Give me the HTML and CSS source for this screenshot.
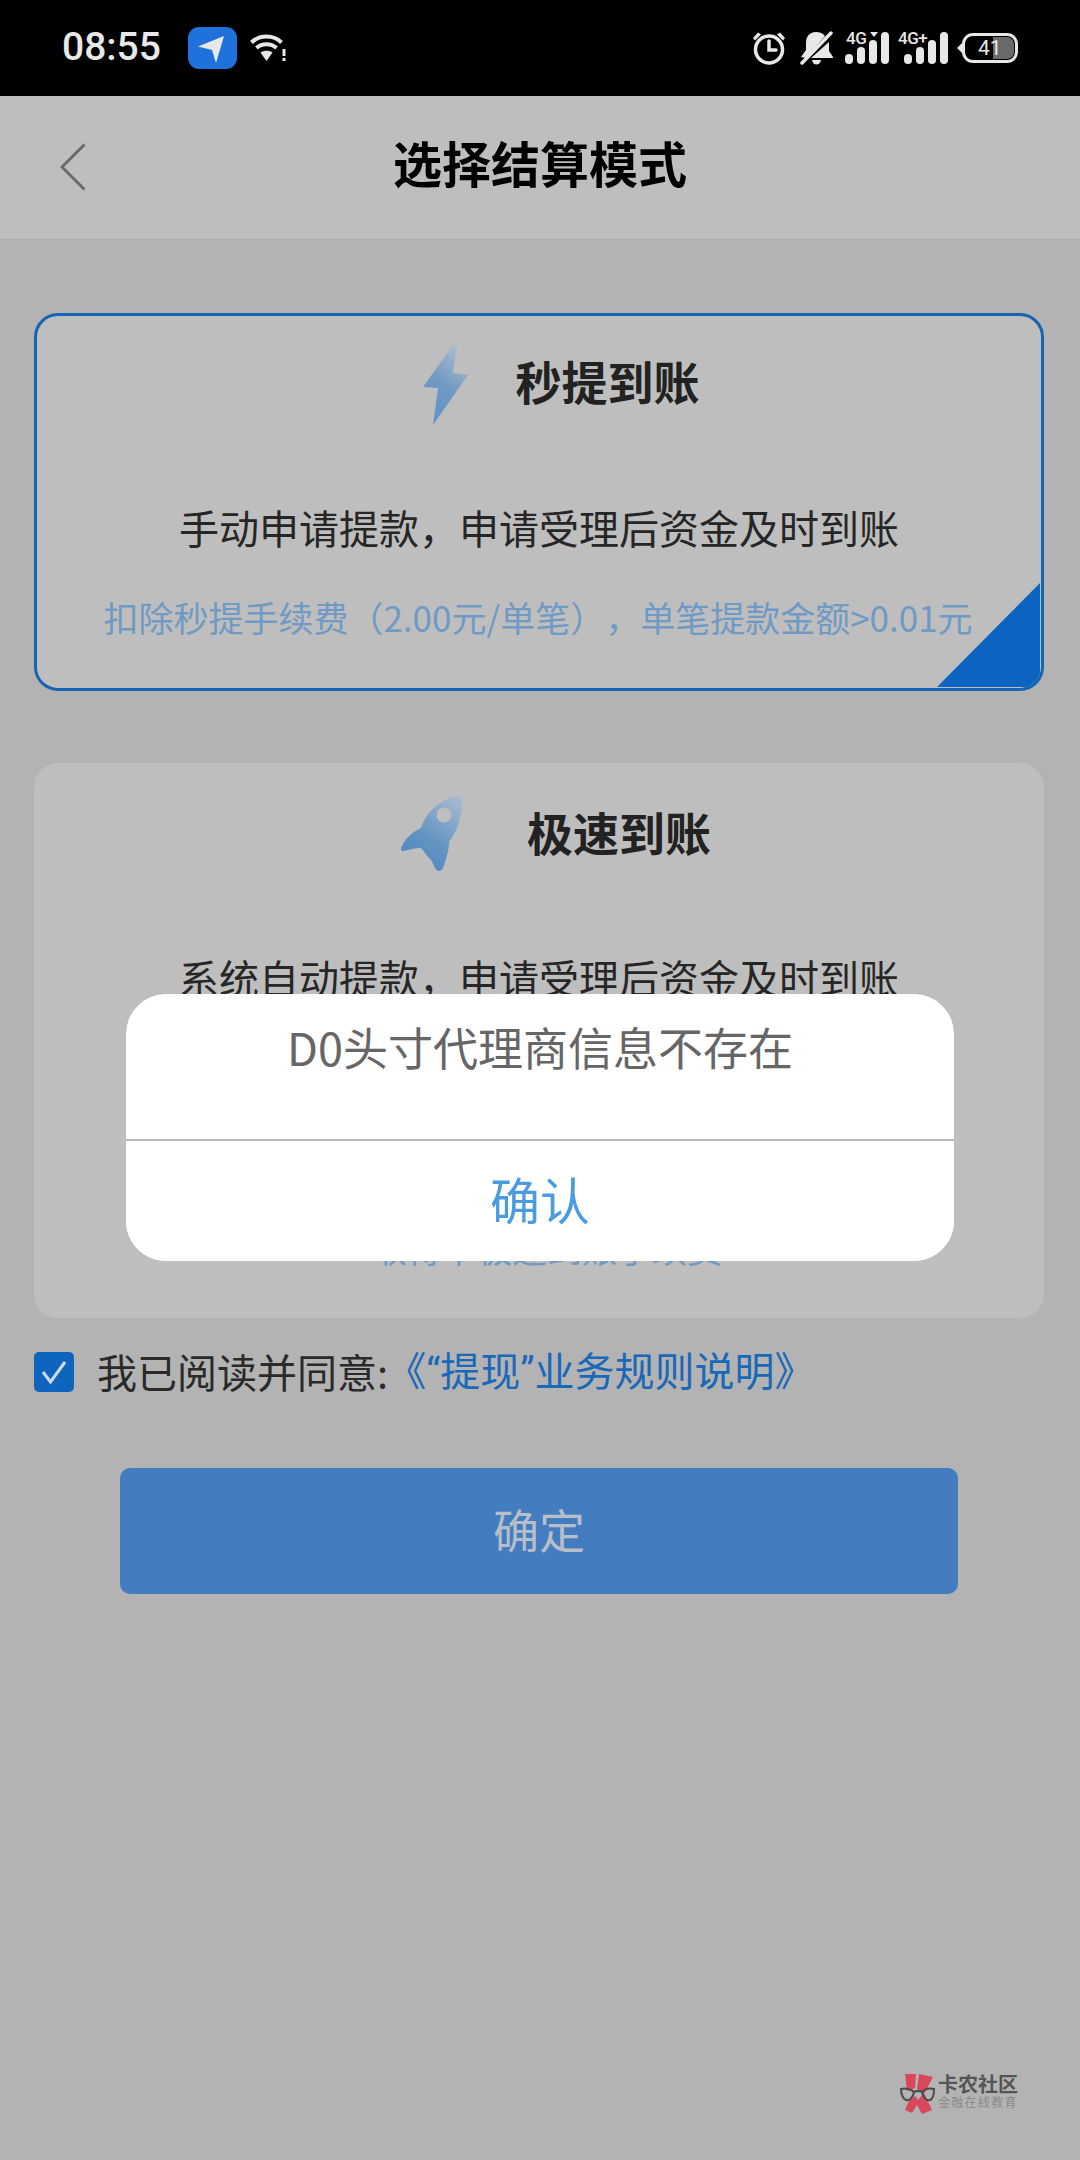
FILE: index.html
```html
<!DOCTYPE html>
<html lang="zh-CN">
<head>
<meta charset="utf-8">
<title>选择结算模式</title>
<link rel="stylesheet" href="styles.css">
</head>
<body>
<div class="page">
  <header class="status">
    <div class="status-left">
      <span class="time">08:55</span>
      <span class="loc">
        <svg width="49" height="42" viewBox="0 0 49 42"><path class="glyph" d="M10 19.500 36 9 28 36 24 23z"/></svg>
      </span>
      <svg class="wifi" width="36" height="30" viewBox="0 0 36 30"><path class="wifi-arc" d="M1.500 9.500C9.500 1.500 23.500 1.500 31.500 9.500M6.500 15C12 10 21 10 26.500 15"/><path class="glyph" d="M10.500 19.500C13.500 17 19.500 17 22.500 19.500L16.500 28zM32.500 16h3v7h-3zM32.500 25h3v3h-3z"/></svg>
    </div>
    <div class="status-right">
      <svg class="ic-alarm" width="34" height="34" viewBox="0 0 34 34"><circle class="ln" cx="17" cy="18.500" r="13.500"/><path class="ln" d="M17 10v9h7"/><path class="glyph" d="M1 7 6 1.500l3 2-6 6zM33 7l-5-5.500-3 2 6 6z"/></svg>
      <svg class="ic-bell" width="34" height="36" viewBox="0 0 34 36"><path class="glyph" d="M16 2c-7 0-10 5-10 11v7l-5 7 5 1L25 6c-2-2.500-5-4-9-4zM29 12v9l4 6v1H11zM12 30h9c-.5 3-2.500 4.500-4.500 4.500S12.500 33 12 30z"/><path class="ln" d="M2 33 31 3"/></svg>
      <span class="signal">
        <span class="net">4G</span>
        <svg class="sim-mark" width="8" height="5" viewBox="0 0 8 5"><path class="glyph" d="M0 0h8L4 5z"/></svg>
        <span class="bars">
          <i class="b1"></i><i class="b2"></i><i class="b3"></i><i class="b4"></i>
        </span>
      </span>
      <span class="signal signal-plus">
        <span class="net">4G+</span>
        <span class="bars">
          <i class="b1"></i><i class="b2"></i><i class="b3"></i><i class="b4"></i>
        </span>
      </span>
      <span class="battery"><span class="battery-fill"></span><span class="battery-num">41</span></span>
    </div>
  </header>

  <nav class="nav">
    <svg class="back" width="26" height="48" viewBox="0 0 26 48"><path d="M24.500 1.500 2 24l22.500 22.500"/></svg>
    <h1 class="nav-title">选择结算模式</h1>
  </nav>

  <main class="main">
    <section class="card card-active">
      <div class="card-head head-a">
        <svg width="46" height="88" viewBox="0 0 46 88">
          <defs><linearGradient id="gb" x1="0.7" y1="0" x2="0.3" y2="1"><stop offset="0" stop-color="#b4c0cc"/><stop offset=".55" stop-color="#7099c2"/><stop offset="1" stop-color="#6095c8"/></linearGradient></defs>
          <path fill="url(#gb)" d="M35 0 30 35 45 37 10 87 15 50 0 49z"/>
        </svg>
        <h2 class="card-title">秒提到账</h2>
      </div>
      <p class="desc desc-a">手动申请提款，申请受理后资金及时到账</p>
      <p class="hint hint-a">扣除秒提手续费（2.00元/单笔），单笔提款金额&gt;0.01元</p>
      <svg class="corner" width="103" height="104" viewBox="0 0 103 104"><path d="M103 0V104H0z"/></svg>
    </section>

    <section class="card">
      <div class="card-head head-b">
        <svg width="66" height="78" viewBox="0 0 66 78">
          <defs><linearGradient id="gr" x1="0.9" y1="0" x2="0.3" y2="1"><stop offset="0" stop-color="#a9bccf"/><stop offset=".6" stop-color="#6594c2"/><stop offset="1" stop-color="#4f88c0"/></linearGradient></defs>
          <path fill="url(#gr)" fill-rule="evenodd" d="M60 0C64 0 64 5 63 10 62 24 58 36 50 47 50 54 48 62 44 73 42 77 38 77 36 73 34 68 32 64 29 62 26 58 24 54 21 53 15 53 10 55 5 56 2 56 1 54 3 51 6 44 13 37 22 33 26 21 36 6 60 0ZM45 12.500A7.500 7.500 0 1 0 45 27.500 7.500 7.500 0 1 0 45 12.500Z"/>
        </svg>
        <h2 class="card-title">极速到账</h2>
      </div>
      <p class="desc desc-b">系统自动提款，申请受理后资金及时到账</p>
      <p class="hint hint-b">取得卡极速到账手续费</p>
    </section>

    <label class="agree">
      <span class="check">
        <svg width="40" height="40" viewBox="0 0 40 40"><path d="M9 20 16.500 30 31 10"/></svg>
      </span>
      <span class="agree-text">我已阅读并同意:</span><span class="agree-link">《<span class="quote">“</span>提现<span class="quote">”</span>业务规则说明》</span>
    </label>

    <button class="submit" type="button">确定</button>
  </main>

  <div class="watermark">
    <svg width="35" height="43" viewBox="0 0 35 43">
      <path class="wm-red" d="M5 2 16 2 15 16 7 19zM19 2 33 5 24 22 17 17zM9 29 15 24 18 28 24 21 32 38 22 42 17 33 12 41 5 38z"/>
      <path class="wm-glass" d="M1 17C5 16 11 17 14 20 13 26 9 29 6 28 3 27 1 22 1 17ZM34 17C30 16 25 17 22 20 23 26 27 29 30 28 33 27 34 22 34 17ZM14 20C16 18.500 20 18.500 22 20"/>
    </svg>
    <div class="wm-text">
      <span class="wm-name">卡农社区</span>
      <span class="wm-sub">金融在线教育</span>
    </div>
  </div>

  <div class="dialog">
    <p class="dialog-msg">D0头寸代理商信息不存在</p>
    <button class="dialog-ok" type="button">确认</button>
  </div>
</div>
</body>
</html>
```

FILE: styles.css
```css
* { box-sizing: border-box; }
html, body { margin: 0; padding: 0; }
body {
  font-family: "Noto Sans CJK SC", "Noto Sans", sans-serif;
  background: #b3b3b3;
  text-spacing-trim: space-all;
}
p, h1, h2 { margin: 0; }
.page {
  position: relative;
  width: 1080px;
  height: 2160px;
  overflow: hidden;
  background: #b3b3b3;
}

/* status bar */
.status {
  height: 96px;
  background: #000;
  display: flex;
  justify-content: space-between;
  align-items: center;
  padding: 0 62px 0 62px;
}
.status-left { display: flex; align-items: center; }
.time {
  font-family: Roboto, sans-serif;
  font-size: 39px;
  font-weight: 500;
  color: #e8e8e8;
  width: 126px;
  line-height: 46px;
  margin-top: -2px;
}
.loc {
  width: 49px;
  height: 42px;
  border-radius: 11px;
  background: #1f72dc;
  display: block;
}
.loc svg { display: block; }
.glyph { fill: #e8e8e8; }
.wifi { margin-left: 13px; margin-top: -1px; }
.wifi-arc { fill: none; stroke: #e8e8e8; stroke-width: 4; }
.status-right { display: flex; align-items: center; }
.ln { fill: none; stroke: #e8e8e8; stroke-width: 3.500; stroke-linecap: round; }
.ic-alarm { margin-right: 14px; }
.ic-bell { margin-right: 12px; }
.signal { position: relative; display: block; width: 43px; height: 32px; margin-right: 9px; }
.signal-plus { width: 50px; margin-right: 14px; }
.net {
  position: absolute;
  left: 0;
  top: -1px;
  font-family: Roboto, sans-serif;
  font-size: 17px;
  font-weight: 500;
  line-height: 14px;
  letter-spacing: -.5px;
  color: #e8e8e8;
}
.sim-mark { position: absolute; left: 24px; top: 0; display: block; }
.bars { position: absolute; right: 0; bottom: 0; display: flex; align-items: flex-end; gap: 4px; }
.bars i { display: block; width: 8px; border-radius: 4px; background: #e8e8e8; }
.b1 { height: 10px; }
.b2 { height: 17px; }
.b3 { height: 24px; }
.b4 { height: 32px; }
.battery {
  position: relative;
  display: block;
  width: 56px;
  height: 30px;
  border: 3px solid #e8e8e8;
  border-radius: 11px;
}
.battery::before {
  content: "";
  position: absolute;
  left: -8px;
  top: 7px;
  width: 0;
  height: 0;
  border-style: solid;
  border-width: 5px 5px 5px 0;
  border-color: transparent #e8e8e8 transparent transparent;
}
.battery-fill { position: absolute; left: 28px; top: 1px; right: 1px; bottom: 1px; background: #6a6a6a; border-radius: 0 7px 7px 0; }
.battery-num {
  position: absolute;
  left: 13px;
  top: 0;
  font-family: Roboto, sans-serif;
  font-size: 21px;
  line-height: 24px;
  color: #e8e8e8;
}

/* nav */
.nav {
  position: relative;
  height: 144px;
  background: #bebebe;
  border-bottom: 1px solid #adadad;
  display: flex;
  align-items: center;
  justify-content: center;
}
.back { position: absolute; left: 60px; top: 47px; }
.back path { fill: none; stroke: #6a6a6a; stroke-width: 3; }
.nav-title { font-size: 49px; font-weight: 700; line-height: 60px; color: #000; margin-top: -11px; }

/* content */
.main { padding: 73px 36px 0 34px; }
.card {
  position: relative;
  height: 555px;
  background: #bebebe;
  border-radius: 24px;
  overflow: hidden;
  text-align: center;
  padding-top: 32px;
}
.card-active {
  height: 378px;
  margin-bottom: 72px;
  border: 3px solid #1565b5;
  padding-top: 22px;
}
.card-head { display: flex; justify-content: center; align-items: center; }
.head-a { gap: 47px; padding-left: 44px; }
.head-b { gap: 62px; padding-left: 32px; }
.card-title { font-size: 46px; font-weight: 700; line-height: 60px; color: #222; }
.head-a .card-title { margin-top: -4px; }
.head-b .card-title { margin-top: -7px; }
.desc { font-size: 40px; line-height: 60px; color: #262626; }
.desc-a { margin-top: 71px; }
.desc-b { margin-top: 74px; }
.hint { font-size: 35px; line-height: 50px; color: #6f9ac4; white-space: nowrap; }
.hint-a { margin-top: 35px; padding-right: 2px; }
.hint-b { margin-top: 216px; padding-left: 16px; }
.corner { position: absolute; right: 1px; bottom: 1px; display: block; }
.corner path { fill: #0a64c0; }

/* agreement */
.agree { display: flex; align-items: center; height: 40px; margin-top: 34px; }
.check {
  width: 40px;
  height: 40px;
  border-radius: 5px;
  background: #0f65bd;
  margin-right: 23px;
  display: block;
}
.check svg { display: block; }
.check path { fill: none; stroke: #c9dcee; stroke-width: 3; }
.agree-text { font-size: 40px; line-height: 60px; padding-bottom: 3px; color: #2a2a2a; }
.agree-link { font-size: 40px; line-height: 60px; padding-bottom: 3px; margin-left: -2px; color: #1a68b8; }
.quote { font-family: Roboto, sans-serif; }

.submit {
  display: block;
  width: 838px;
  height: 126px;
  margin: 76px 0 0 86px;
  padding: 0 0 7px;
  border: 0;
  border-radius: 10px;
  background: #437dbf;
  font-family: inherit;
  font-size: 46px;
  color: #b6bec8;
}

/* watermark */
.watermark {
  position: absolute;
  left: 900px;
  top: 2072px;
  display: flex;
  align-items: flex-start;
  gap: 3px;
}
.watermark svg { display: block; }
.wm-red { fill: #d8485a; }
.wm-glass { fill: none; stroke: #4a4a4a; stroke-width: 2; }
.wm-text { display: flex; flex-direction: column; margin-top: 1px; }
.wm-name { font-size: 20px; font-weight: 700; line-height: 22px; color: #555; }
.wm-sub { font-size: 12px; line-height: 14px; color: #8a8a8a; letter-spacing: 1.300px; }

/* dialog */
.dialog {
  position: absolute;
  left: 126px;
  top: 994px;
  width: 828px;
  height: 267px;
  background: #fff;
  border-radius: 40px;
  overflow: hidden;
  display: flex;
  flex-direction: column;
}
.dialog-msg {
  height: 147px;
  padding-top: 23px;
  border-bottom: 2px solid #b9b9b9;
  text-align: center;
  font-size: 45px;
  line-height: 60px;
  color: #666;
}
.dialog-ok {
  flex: 1;
  padding: 0 0 7px;
  border: 0;
  background: #fff;
  font-family: inherit;
  font-size: 50px;
  color: #4a9bdf;
}
```
